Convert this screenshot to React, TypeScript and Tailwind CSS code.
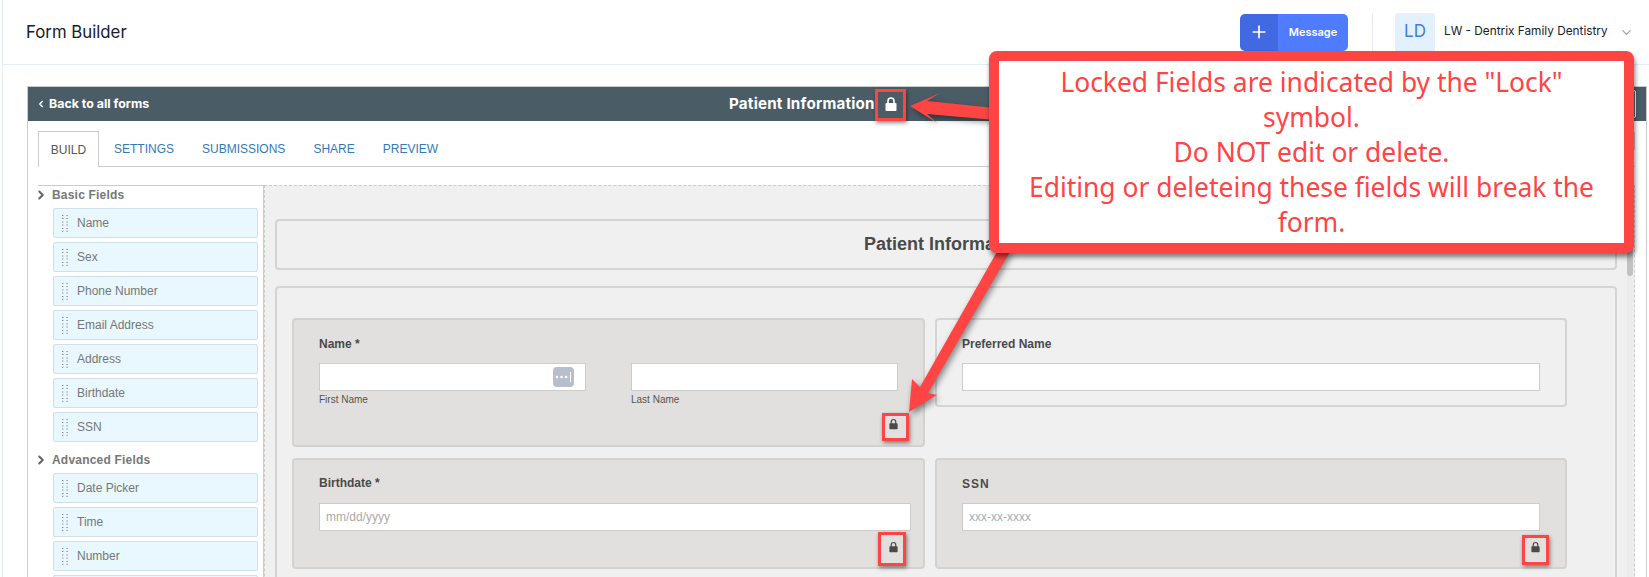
import { ChevronDown, ChevronLeft, ChevronRight, Plus } from 'lucide-react'

const basicFields = ['Name', 'Sex', 'Phone Number', 'Email Address', 'Address', 'Birthdate', 'SSN']
// last row only peeks in at the bottom of the window, its label is below the fold
const advancedFields = ['Date Picker', 'Time', 'Number', '']
const tabs = ['SETTINGS', 'SUBMISSIONS', 'SHARE', 'PREVIEW']

const LockIcon = ({ className }: { className: string }) => (
  <svg viewBox="0 0 12 14" className={className} fill="currentColor">
    <path d="M3 6.5V4a3 3 0 0 1 6 0v2.5" fill="none" stroke="currentColor" strokeWidth="1.6" />
    <rect x="0.5" y="6" width="11" height="8" rx="1" />
  </svg>
)

const Grip = () => (
  <svg viewBox="0 0 6 17" className="w-[6px] h-[17px] text-[#8a8a8a]" fill="currentColor">
    {[0, 3, 6.5, 9.5, 13, 15.8].map((y) => (
      <g key={y}>
        <rect x="0" y={y} width="1.4" height="1" />
        <rect x="4.4" y={y} width="1.4" height="1" />
      </g>
    ))}
  </svg>
)

const FieldItem = ({ label }: { label: string }) => (
  <div className="h-[30px] mb-[4px] flex items-center pl-[8px] bg-[#e9f8fe] border border-[#cfe0ea] rounded-[2px] text-[12px] text-[#777]">
    <Grip />
    <span className="ml-[9px]">{label}</span>
  </div>
)

const FieldGroup = ({ title, className, items }: { title: string; className: string; items: string[] }) => (
  <div>
    <div className={`flex items-center text-[12px] font-bold text-[#777] tracking-[0.2px] ${className}`}>
      <ChevronRight className="w-[14px] h-[16px] text-[#666] -ml-[4px]" strokeWidth={3.5} />
      <span className="ml-[4px]">{title}</span>
    </div>
    <div className="pl-[15px] pr-[5px]">
      {items.map((item) => (
        <FieldItem key={item} label={item} />
      ))}
    </div>
  </div>
)

const TextInput = ({ className, placeholder }: { className: string; placeholder?: string }) => (
  <div className={`h-[28px] bg-white border border-[#ccc] flex items-center pl-[6px] text-[12px] text-[#aaa] ${className}`}>
    {placeholder}
  </div>
)

const FieldLabel = ({ text, className }: { text: string; className: string }) => (
  <div className={`text-[12px] leading-[16px] font-bold text-[#4a4a4a] ${className}`}>{text}</div>
)

const RedBox = ({ className }: { className: string }) => (
  <div className={`absolute border-[3px] border-[#ff4444] shadow-[1px_2px_4px_rgba(0,0,0,0.45)] ${className}`} />
)

export default function App() {
  return (
    <div className="relative w-[1649px] h-[577px] overflow-hidden bg-white" style={{ fontFamily: '"Liberation Sans", Arial, sans-serif' }}>
      <div className="ml-[2px] h-full border-l border-[#e3ecf8]">
        {/* top bar */}
        <div className="h-[65px] border-b border-[#e3ecf8] flex items-center pl-[23px] pr-[15px] font-['Inter',sans-serif]">
          <div className="text-[16.8px] text-[#16202c] pt-[2px]">Form Builder</div>
          <div className="ml-auto flex items-center">
            <div className="w-[108px] h-[37px] rounded-[5px] overflow-hidden flex text-white">
              <div className="w-[38px] bg-[#4169e1] flex items-center justify-center">
                <Plus className="w-[20px] h-[20px]" strokeWidth={2} />
              </div>
              <div className="flex-1 bg-[#4f7cff] flex items-center justify-center text-[11px] font-semibold">Message</div>
            </div>
            <div className="w-px h-[38px] bg-[#e3ecf8] ml-[24px]" />
            <div className="w-[40px] h-[39px] ml-[22px] bg-[#e3f0fd] rounded-[3px] flex items-center justify-center text-[17px] text-[#4a7bdc]">LD</div>
            <div className="w-[175px] ml-[9px] text-[11.8px] text-[#16202c] whitespace-nowrap">LW - Dentrix Family Dentistry</div>
            <ChevronDown className="w-[15px] h-[15px] text-[#9aa3ad]" strokeWidth={2} />
          </div>
        </div>

        {/* form panel */}
        <div className="mt-[21px] ml-[24px] mr-[2px] border border-b-0 border-[#ccc] h-[600px]">
          <div className="h-[34px] bg-[#4a5d66] flex items-center text-white font-['Inter',sans-serif]">
            <div className="w-[701px] pl-[8px] flex items-center text-[12.4px] font-bold pt-[1px]">
              <ChevronLeft className="w-[10px] h-[10px]" strokeWidth={3.5} />
              <span className="ml-[3px]">Back to all forms</span>
            </div>
            <div className="w-[155px] text-[15.2px] font-bold tracking-[0.2px] whitespace-nowrap">Patient Information</div>
            <LockIcon className="w-[12px] h-[14px] ml-[1px] text-white" />
            <div className="ml-auto mr-[10px] w-[40px] h-[28px] border border-white rounded-[2px]" />
          </div>

          <div className="pl-[10px] pr-[11px]">
            {/* tabs */}
            <div className="mt-[10px] h-[36px] border-b border-[#ccc] flex text-[12px]">
              <div className="w-[61px] h-[36px] bg-white border border-b-0 border-[#ccc] mr-[1px] flex items-center justify-center text-[#555]">BUILD</div>
              {tabs.map((tab) => (
                <div key={tab} className="px-[14px] flex items-center text-[#337ab7]">{tab}</div>
              ))}
              <div className="ml-auto w-[40px] h-[20px] border border-[#ccc] rounded-[2px]" />
            </div>

            <div className="mt-[18px] flex">
              {/* field list */}
              <div className="w-[226px] border-t border-r border-[#ccc]">
                <FieldGroup title="Basic Fields" className="h-[22px] pb-[4px]" items={basicFields} />
                <FieldGroup title="Advanced Fields" className="h-[27px]" items={advancedFields} />
              </div>

              {/* canvas */}
              <div className="relative flex-1 bg-[#f0f0f0] border-t border-x border-dashed border-[#ccc] pl-[10px] pr-[17px] pt-[33px]">
                <div className="h-[51px] border-2 border-[#d4d4d4] rounded-[4px] flex items-center justify-center text-[18px] font-bold text-[#4a4a4a]">
                  Patient Information
                </div>
                <div className="mt-[16px] border-2 border-[#d4d4d4] rounded-[4px] pl-[15px] pt-[30px] h-[400px]">
                  <div className="grid grid-cols-[633px_632px] gap-x-[10px] gap-y-[11px]">
                    <div className="h-[129px] bg-[#e1e0de] border-2 border-[#d3d2d0] rounded-[4px] pl-[25px] pt-[16px]">
                      <FieldLabel text="Name *" className="mb-[11px]" />
                      <div className="flex gap-[45px]">
                        <div>
                          <div className="relative w-[267px] h-[28px] bg-white border border-[#ccc]">
                            <div className="absolute right-[11px] top-[3px] w-[21px] h-[20px] rounded-[4px] bg-[#b8bfcc] flex items-center justify-center">
                              <svg viewBox="0 0 17 10" className="w-[17px] h-[10px]" fill="#fff">
                                <circle cx="2" cy="5" r="1.3" />
                                <circle cx="6.5" cy="5" r="1.3" />
                                <circle cx="11" cy="5" r="1.3" />
                                <rect x="15" y="0" width="1" height="10" />
                              </svg>
                            </div>
                          </div>
                          <div className="mt-[2px] text-[10px] leading-[14px] text-[#555]">First Name</div>
                        </div>
                        <div>
                          <TextInput className="w-[267px]" />
                          <div className="mt-[2px] text-[10px] leading-[14px] text-[#555]">Last Name</div>
                        </div>
                      </div>
                      <div className="flex justify-end pr-[25px] mt-[11px] text-[#4a4a4a]">
                        <LockIcon className="w-[9px] h-[12px]" />
                      </div>
                    </div>
                    <div className="h-[89px] self-start bg-[#f0f0f0] border-2 border-[#d4d4d4] rounded-[4px] pl-[25px] pr-[25px] pt-[16px]">
                      <FieldLabel text="Preferred Name" className="mb-[11px]" />
                      <TextInput className="w-full" />
                    </div>
                    <div className="h-[111px] bg-[#e1e0de] border-2 border-[#d3d2d0] rounded-[4px] pl-[25px] pr-[12px] pt-[15px]">
                      <FieldLabel text="Birthdate *" className="mb-[12px]" />
                      <TextInput className="w-full" placeholder="mm/dd/yyyy" />
                      <div className="flex justify-end pr-[13px] mt-[10px] text-[#4a4a4a]">
                        <LockIcon className="w-[9px] h-[12px]" />
                      </div>
                    </div>
                    <div className="h-[111px] bg-[#e1e0de] border-2 border-[#d3d2d0] rounded-[4px] pl-[25px] pr-[25px] pt-[16px]">
                      <FieldLabel text="SSN" className="mb-[11px] tracking-[1px]" />
                      <TextInput className="w-full" placeholder="xxx-xx-xxxx" />
                      <div className="flex justify-end mt-[10px] text-[#4a4a4a]">
                        <LockIcon className="w-[9px] h-[12px]" />
                      </div>
                    </div>
                  </div>
                </div>
                {/* scrollbar */}
                <div className="absolute right-[1px] top-0 bottom-0 w-[6px] bg-[#ececec]">
                  <div className="h-[90px] rounded-b-[3px] bg-[#c1c1c1]" />
                </div>
              </div>
            </div>
          </div>
        </div>
      </div>

      {/* annotations */}
      <svg className="absolute left-0 top-0 w-[1649px] h-[577px] drop-shadow-[2px_3px_3px_rgba(0,0,0,0.45)]" viewBox="0 0 1649 577" fill="#ff4444">
        <polygon points="910,106 940,93 927,101 995,108 995,120 927,114 937,123" />
        <polygon points="998,250 1011,250 928,393 937,395 909,412 912,379 920,387" />
      </svg>
      <RedBox className="left-[875px] top-[89px] w-[31px] h-[32px]" />
      <RedBox className="left-[882px] top-[413px] w-[27px] h-[28px]" />
      <RedBox className="left-[878px] top-[532px] w-[28px] h-[34px]" />
      <RedBox className="left-[1522px] top-[535px] w-[27px] h-[30px]" />
      <div className="absolute left-[989px] top-[51px] w-[645px] h-[202px] bg-white border-[10px] border-[#ff4444] rounded-[8px] shadow-[1px_4px_5px_rgba(0,0,0,0.5)] px-[25px] flex items-center justify-center text-center text-[26.4px] leading-[35px] text-[#ff4444] font-['Noto_Sans',sans-serif]">
        <div>
          Locked Fields are indicated by the "Lock" symbol.
          <br />
          Do NOT edit or delete.
          <br />
          Editing or deleteing these fields will break the form.
        </div>
      </div>
    </div>
  )
}
